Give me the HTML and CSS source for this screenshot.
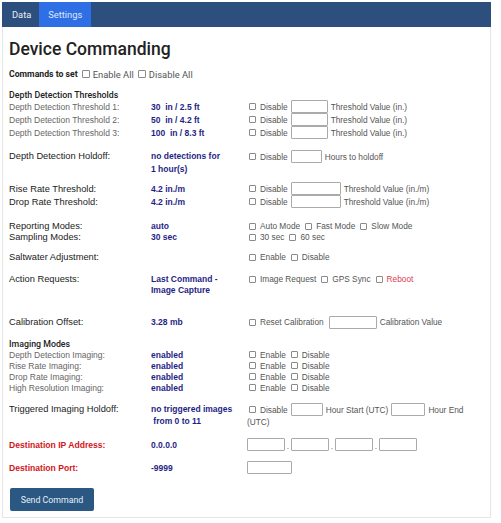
FILE: index.html
```html
<!DOCTYPE html>
<html>
<head>
<meta charset="utf-8">
<link rel="stylesheet" href="styles.css">
</head>
<body>
<div class="nav">
  <a class="tab">Data</a>
  <a class="tab active">Settings</a>
</div>
<div class="card">
  <h1 class="title">Device Commanding</h1>
  <div class="cmds">
    <b>Commands to set</b>
    <label class="chk big"><input type="checkbox">Enable All</label>
    <label class="chk big"><input type="checkbox">Disable All</label>
  </div>

  <div class="head first">Depth Detection Thresholds</div>
  <div class="row h13">
    <div class="lbl sub">Depth Detection Threshold 1:</div>
    <div class="val">30&nbsp; in / 2.5 ft</div>
    <div class="ctl"><label class="chk"><input type="checkbox">Disable</label><input class="txt w37" type="text"><span>Threshold Value (in.)</span></div>
  </div>
  <div class="row h13">
    <div class="lbl sub">Depth Detection Threshold 2:</div>
    <div class="val">50&nbsp; in / 4.2 ft</div>
    <div class="ctl"><label class="chk"><input type="checkbox">Disable</label><input class="txt w37" type="text"><span>Threshold Value (in.)</span></div>
  </div>
  <div class="row h13">
    <div class="lbl sub">Depth Detection Threshold 3:</div>
    <div class="val">100&nbsp; in / 8.3 ft</div>
    <div class="ctl"><label class="chk"><input type="checkbox">Disable</label><input class="txt w37" type="text"><span>Threshold Value (in.)</span></div>
  </div>

  <div class="row top holdoff">
    <div class="lbl">Depth Detection Holdoff:</div>
    <div class="val two">no detections for<br>1 hour(s)</div>
    <div class="ctl"><label class="chk"><input type="checkbox">Disable</label><input class="txt w31" type="text"><span>Hours to holdoff</span></div>
  </div>

  <div class="row h13 rise">
    <div class="lbl">Rise Rate Threshold:</div>
    <div class="val">4.2 in./m</div>
    <div class="ctl"><label class="chk"><input type="checkbox">Disable</label><input class="txt w50" type="text"><span>Threshold Value (in./m)</span></div>
  </div>
  <div class="row h13">
    <div class="lbl">Drop Rate Threshold:</div>
    <div class="val">4.2 in./m</div>
    <div class="ctl"><label class="chk"><input type="checkbox">Disable</label><input class="txt w50" type="text"><span>Threshold Value (in./m)</span></div>
  </div>

  <div class="row h11 reporting">
    <div class="lbl">Reporting Modes:</div>
    <div class="val">auto</div>
    <div class="ctl"><label class="chk"><input type="checkbox">Auto Mode</label><label class="chk"><input type="checkbox">Fast Mode</label><label class="chk"><input type="checkbox">Slow Mode</label></div>
  </div>
  <div class="row h11">
    <div class="lbl">Sampling Modes:</div>
    <div class="val">30 sec</div>
    <div class="ctl"><label class="chk"><input type="checkbox">30 sec</label><label class="chk"><input type="checkbox">60 sec</label></div>
  </div>

  <div class="row h11 salt">
    <div class="lbl">Saltwater Adjustment:</div>
    <div class="val"></div>
    <div class="ctl"><label class="chk"><input type="checkbox">Enable</label><label class="chk"><input type="checkbox">Disable</label></div>
  </div>

  <div class="row top action">
    <div class="lbl l11">Action Requests:</div>
    <div class="val l11">Last Command -<br>Image Capture</div>
    <div class="ctl l11"><label class="chk"><input type="checkbox">Image Request</label><label class="chk"><input type="checkbox">GPS Sync</label><label class="chk red"><input type="checkbox">Reboot</label></div>
  </div>

  <div class="row h13 calib">
    <div class="lbl">Calibration Offset:</div>
    <div class="val">3.28 mb</div>
    <div class="ctl"><label class="chk"><input type="checkbox">Reset Calibration</label><input class="txt w48 ml" type="text"><span>Calibration Value</span></div>
  </div>

  <div class="head imaging">Imaging Modes</div>
  <div class="row h11">
    <div class="lbl sub">Depth Detection Imaging:</div>
    <div class="val">enabled</div>
    <div class="ctl"><label class="chk"><input type="checkbox">Enable</label><label class="chk"><input type="checkbox">Disable</label></div>
  </div>
  <div class="row h11">
    <div class="lbl sub">Rise Rate Imaging:</div>
    <div class="val">enabled</div>
    <div class="ctl"><label class="chk"><input type="checkbox">Enable</label><label class="chk"><input type="checkbox">Disable</label></div>
  </div>
  <div class="row h11">
    <div class="lbl sub">Drop Rate Imaging:</div>
    <div class="val">enabled</div>
    <div class="ctl"><label class="chk"><input type="checkbox">Enable</label><label class="chk"><input type="checkbox">Disable</label></div>
  </div>
  <div class="row h11">
    <div class="lbl sub">High Resolution Imaging:</div>
    <div class="val">enabled</div>
    <div class="ctl"><label class="chk"><input type="checkbox">Enable</label><label class="chk"><input type="checkbox">Disable</label></div>
  </div>

  <div class="row top trig">
    <div class="lbl l12">Triggered Imaging Holdoff:</div>
    <div class="val l12 trigval">no triggered images<br>&nbsp;from 0 to 11</div>
    <div class="ctl wrap"><label class="chk"><input type="checkbox">Disable</label><input class="txt w32" type="text"><span class="gap">Hour Start (UTC)</span><input class="txt w34" type="text"><span>Hour End</span><span class="break"></span><span class="utc">(UTC)</span></div>
  </div>

  <div class="row h13 ip">
    <div class="lbl redlbl">Destination IP Address:</div>
    <div class="val">0.0.0.0</div>
    <div class="ctl ipctl"><input class="txt w38" type="text"><span class="dot">.</span><input class="txt w38" type="text"><span class="dot">.</span><input class="txt w38" type="text"><span class="dot">.</span><input class="txt w38" type="text"></div>
  </div>
  <div class="row h13 port">
    <div class="lbl redlbl">Destination Port:</div>
    <div class="val">-9999</div>
    <div class="ctl ipctl"><input class="txt w45" type="text"></div>
  </div>

  <button class="send" type="button">Send Command</button>
</div>
</body>
</html>
```

FILE: styles.css
```css
html, body {
  margin: 0;
  padding: 0;
  background: #ffffff;
}
body {
  padding: 2px 0 0 2px;
  width: 489px;
  font-family: "Liberation Sans", Arial, sans-serif;
}
.nav {
  display: flex;
  height: 25px;
  background: #2c4f7d;
  padding-left: 2px;
}
.tab {
  display: flex;
  align-items: center;
  padding: 0 8px;
  color: #e8eef6;
  font-family: Roboto, "Liberation Sans", sans-serif;
  font-size: 9.3px;
}
.tab.active {
  background: #2f6fe6;
  padding: 0 9px;
  color: #dfe8f8;
}
.card {
  border: 1px solid #e6e6e6;
  border-top: none;
  padding: 12px 6px 6px 6px;
}
.title {
  margin: 0;
  font-family: Roboto, "Liberation Sans", sans-serif;
  font-weight: 500;
  font-size: 17.5px;
  line-height: 20px;
  color: #222;
}
.cmds {
  margin-top: 9.5px;
  height: 11px;
  display: flex;
  align-items: center;
  font-family: Roboto, "Liberation Sans", sans-serif;
  font-size: 8.7px;
  color: #222;
}
.cmds b {
  font-weight: 700;
  margin-right: 4px;
}
.chk {
  display: inline-flex;
  align-items: center;
  margin-right: 5px;
  white-space: nowrap;
}
.chk input {
  -webkit-appearance: none;
  appearance: none;
  margin: 0 4px 0 0;
  width: 7px;
  height: 7px;
  border: 1px solid #8a8a8a;
  border-radius: 1px;
  background: #fff;
  box-sizing: border-box;
  flex: none;
}
.chk.big {
  color: #555;
  font-size: 9.4px;
  margin-right: 4px;
}
.chk.big input {
  width: 8px;
  height: 8px;
  margin-right: 3px;
}
.head {
  font-family: Roboto, "Liberation Sans", sans-serif;
  font-weight: 500;
  font-size: 8.8px;
  line-height: 10px;
  height: 10px;
  color: #222;
}
.head.first { margin-top: 10.5px; }
.head.imaging { margin-top: 10.5px; }
.row {
  display: grid;
  grid-template-columns: 142px 96px 1fr;
  align-items: center;
}
.row.top { align-items: start; }
.h13 { height: 13px; }
.h11 { height: 11px; }
.lbl {
  font-size: 9.3px;
  color: #222;
  white-space: nowrap;
}
.lbl.sub {
  font-size: 8.5px;
  color: #666;
}
.lbl.redlbl {
  color: #d4141c;
  font-weight: bold;
  font-size: 8.6px;
}
.val {
  font-size: 8.5px;
  font-weight: bold;
  color: #1f1f86;
  white-space: nowrap;
}
.val.two { line-height: 12.5px; }
.l11 { line-height: 11px; }
.l12 { line-height: 12px; }
.ctl {
  display: flex;
  align-items: center;
  font-size: 8.3px;
  color: #555;
  white-space: nowrap;
  padding-left: 2px;
}
.ctl .chk { margin-right: 5px; }
.ctl span { margin-left: 3px; }
.red { color: #e0404e; }
.txt {
  height: 13px;
  box-sizing: border-box;
  border: 1px solid #aaaaaa;
  border-radius: 1px;
  margin: 0;
  padding: 0;
  background: #fff;
  flex: none;
}
.chk + .txt { margin-left: -2px; }
.w31 { width: 31px; }
.w32 { width: 32px; }
.w34 { width: 34px; }
.w37 { width: 37px; }
.w38 { width: 38px; }
.w45 { width: 45px; }
.w48 { width: 48px; }
.w50 { width: 50px; }
.chk + .txt.ml { margin-left: 0; }
.holdoff { margin-top: 11px; height: 25px; }
.holdoff .lbl { line-height: 13px; }
.holdoff .ctl { height: 13px; }
.rise { margin-top: 7px; }
.reporting { margin-top: 12.5px; }
.salt { margin-top: 9px; }
.action { margin-top: 11px; height: 22px; }
.calib { margin-top: 20px; }
.trig { margin-top: 10px; height: 24px; }
.trig .lbl { line-height: 13px; }
.trigval { line-height: 12px; }
.ctl.wrap {
  flex-wrap: wrap;
  height: 24px;
  align-content: flex-start;
  row-gap: 0;
}
.ctl.wrap > * { height: 13px; display: inline-flex; align-items: center; }
.ctl.wrap > .txt { display: block; }
.ctl.wrap > .gap { margin-right: 3px; }
.ctl.wrap > .break {
  flex-basis: 100%;
  height: 0;
  margin: 0;
}
.ctl.wrap > .utc {
  margin-left: -2px;
  height: 11px;
}
.ip { margin-top: 11px; }
.port { margin-top: 10px; }
.ipctl { padding-left: 0; }
.dot {
  width: 6px;
  text-align: center;
  margin: 0 !important;
  align-self: flex-end;
  line-height: 10px;
  color: #777;
}
.send {
  display: block;
  margin: 14px 0 0 1px;
  width: 84px;
  height: 23px;
  border: none;
  border-radius: 2px;
  background: #2b5783;
  color: #e9eff6;
  font-family: Roboto, "Liberation Sans", sans-serif;
  font-size: 8.8px;
  padding: 0;
}
```
